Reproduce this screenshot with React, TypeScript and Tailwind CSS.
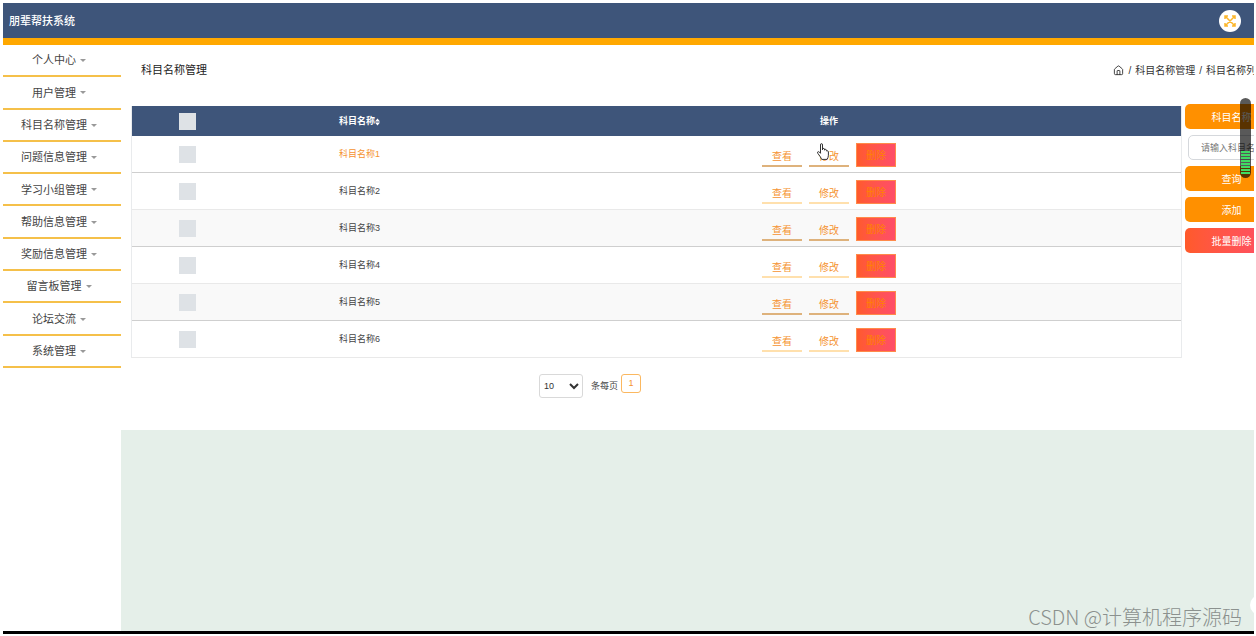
import { House } from "lucide-react";

const menus = [
  "个人中心",
  "用户管理",
  "科目名称管理",
  "问题信息管理",
  "学习小组管理",
  "帮助信息管理",
  "奖励信息管理",
  "留言板管理",
  "论坛交流",
  "系统管理",
];

const rows = ["科目名称1", "科目名称2", "科目名称3", "科目名称4", "科目名称5", "科目名称6"];

function ExpandIcon() {
  return (
    <svg viewBox="0 0 12 12" className="h-3 w-3" fill="none" stroke="#fbb62c" strokeWidth="1.5">
      <path d="M1 4V1h3M8 1h3v3M11 8v3H8M4 11H1V8M1 1l10 10M11 1L1 11" />
    </svg>
  );
}

function HandCursor() {
  return (
    <svg viewBox="0 0 12 17" className="absolute top-0 left-2 h-[17px] w-3" fill="#fff" stroke="#333" strokeLinejoin="round">
      <path d="M3.5 10V2q0-1.4 1-1.4T5.5 2v5V5.6q1.900-.8 2 .6v1-.8q1.700-.6 1.900.7v.8q1.900-.5 2 .8v3.600q0 2-1.400 4.100H4.700Q4 14.400.8 10.300 0 8.800 1.300 8.600 2.300 8.600 3.500 10.300z" />
    </svg>
  );
}

// 右侧悬浮的音量条
function LevelMeter() {
  return (
    <div className="absolute top-[95px] right-[3px] flex h-20 w-[11px] flex-col justify-end rounded-full bg-black/65 px-px pb-1">
      <div className="flex flex-col gap-px">
        {[1, 2, 3, 4, 5, 6, 7, 8].map((n) => (
          <span key={n} className="h-[2px] bg-[#3fdc63]" />
        ))}
      </div>
    </div>
  );
}

function Sidebar() {
  return (
    <nav className="w-[118px] shrink-0 bg-white">
      <ul className="grid h-[323px] auto-rows-fr">
        {menus.map((name) => (
          <li key={name} className="border-b-2 border-[#f5c04a]">
            <a href="#" className="flex h-full items-center justify-center gap-1 pt-px pr-1.5 text-[11px] text-[#444]">
              {name}
              <svg viewBox="0 0 6 3" className="h-[3px] w-[6px]" fill="#999">
                <path d="M0 0h6L3 3z" />
              </svg>
            </a>
          </li>
        ))}
      </ul>
    </nav>
  );
}

function SubjectTable() {
  return (
    <table className="w-full table-fixed border-separate border-spacing-0 border-x border-[#e9ebed] text-center text-[9px] text-[#444]">
      <thead>
        <tr className="bg-[#3e557a] text-white">
          <th className="h-[30px] w-[110px] p-0">
            <input type="checkbox" aria-label="全选" className="mx-auto block h-[17px] w-[17px] appearance-none bg-[#dee2e6]" />
          </th>
          <th className="w-[235px] p-0 pt-0.5 font-bold">
            <span className="inline-flex items-center">
              科目名称
              <svg viewBox="0 0 5 8" className="h-2 w-[5px]" fill="#fff">
                <path d="M0 3.500h5L2.500.5zM0 4.500h5L2.500 7.500z" />
              </svg>
            </span>
          </th>
          <th className="p-0 pt-0.5 font-bold">操作</th>
        </tr>
      </thead>
      <tbody>
        {rows.map((name, i) => {
          const odd = i % 2 === 0;
          const line = `border-b ${odd ? "border-[#cfcfcf]" : "border-[#e9e9e9]"}`;
          const link = `relative h-6 w-10 border-b-2 pt-1 text-[10px] text-[#f59331] ${odd ? "border-[#deb27c]" : "border-[#ffe0ad]"}`;
          return (
            <tr key={name} className={odd && i > 0 ? "bg-[#f9f9f9]" : "bg-white"}>
              <td className={`h-[37px] p-0 ${line}`}>
                <input type="checkbox" aria-label={name} className="mx-auto block h-[17px] w-[17px] appearance-none bg-[#dee2e6]" />
              </td>
              <td className={`p-0 pt-0.5 ${line} ${i === 0 ? "text-[#f59331]" : ""}`}>{name}</td>
              <td className={`p-0 pt-0.5 ${line}`}>
                <div className="flex items-center justify-center gap-[7px]">
                  <button className={link}>查看</button>
                  <button className={link}>
                    修改
                    {i === 0 && <HandCursor />}
                  </button>
                  <button className="h-6 w-10 border border-[#ff8a4a] bg-linear-to-r from-[#ff5a2a] to-[#ff4d68] text-[10px] text-[#ff8200]">
                    删除
                  </button>
                </div>
              </td>
            </tr>
          );
        })}
      </tbody>
    </table>
  );
}

function SearchPanel() {
  const orange = "h-[25px] rounded-[5px] bg-[#ff9000] pt-0.5";
  return (
    <form className="-mt-0.5 flex w-[93px] shrink-0 flex-col gap-1.5 text-[10px] text-white">
      <label htmlFor="subject" className={`flex items-center justify-center ${orange}`}>科目名称</label>
      <input
        id="subject"
        placeholder="请输入科目名称"
        className="ml-[3px] h-[25px] rounded-[5px] border border-[#d5d8dc] bg-white px-3 text-[9px] text-[#444] placeholder:text-[#777]"
      />
      <button type="button" className={orange}>查询</button>
      <button type="button" className={orange}>添加</button>
      <button type="button" className="h-[25px] rounded-[5px] bg-linear-to-r from-[#ff5a2a] to-[#ff4d68] pt-0.5">批量删除</button>
    </form>
  );
}

export default function App() {
  return (
    <div className="flex min-h-screen flex-col bg-white pt-[3px] pr-[2px] pb-[2px] pl-[3px] font-['Liberation_Sans','Noto_Sans_CJK_SC',sans-serif]">
      <div className="relative flex flex-1 flex-col overflow-hidden border-b-[3px] border-black">
        <header className="flex h-[42px] items-center justify-between border-b-[7px] border-[#ffa800] bg-[#3e557a] pr-[13px] pl-1.5">
          <h1 className="pt-0.5 text-[11px] font-medium text-white">朋辈帮扶系统</h1>
          <button aria-label="全屏" className="flex h-[22px] w-[22px] items-center justify-center rounded-full bg-white">
            <ExpandIcon />
          </button>
        </header>

        <div className="flex flex-1">
          <Sidebar />
          <main className="flex min-w-0 flex-1 flex-col overflow-hidden bg-[#e5efe9]">
            <section className="-mr-6 bg-white pb-8 pl-2.5">
              <div className="flex h-[61px] items-center justify-between pr-3 pb-2.5 pl-2.5">
                <h2 className="text-[11px] text-[#222]">科目名称管理</h2>
                <div className="flex items-center gap-1 text-[10px] whitespace-nowrap text-[#333]">
                  <House className="h-[11px] w-[11px]" strokeWidth={2} />
                  <span>/</span>
                  <a href="#">科目名称管理</a>
                  <span>/</span>
                  <span>科目名称列表</span>
                </div>
              </div>

              <div className="flex items-start gap-[3px]">
                <div className="min-w-0 flex-1">
                  <SubjectTable />
                </div>
                <SearchPanel />
              </div>

              <div className="mt-4 ml-[408px] flex items-start text-[9px] text-[#444]">
                <select aria-label="每页条数" className="h-6 w-11 rounded-[3px] border border-[#d9d9d9] bg-white text-[9px] text-[#333]">
                  <option>10</option>
                </select>
                <span className="mt-1.5 ml-2">条每页</span>
                <button className="ml-[3px] h-[19px] w-5 rounded-[3px] border border-[#fbb860] text-[#f59331]">1</button>
              </div>
            </section>
          </main>
        </div>

        <LevelMeter />
        <div className="absolute -right-4 bottom-4 h-5 w-5 rounded-full bg-white" />
        <p className="absolute right-3 bottom-0 font-['Noto_Sans_CJK_SC',sans-serif] text-[20px] leading-7 font-light text-[#8b918e]">
          CSDN @计算机程序源码
        </p>
      </div>
    </div>
  );
}
